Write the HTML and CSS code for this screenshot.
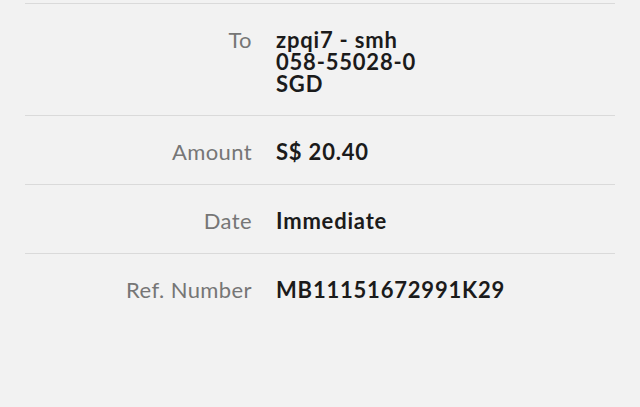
FILE: index.html
```html
<!DOCTYPE html>
<html>
    <head>
        <meta charset="UTF-8">
        <title>Transfer details</title>
        <link rel="stylesheet" href="styles.css">
    </head>
    <body>
        <div id="details">
            <div class="row row_first">
                <div class="label">To</div>
                <div class="value">zpqi7 - smh<br>058-55028-0<br>SGD</div>
            </div>
            <div class="row">
                <div class="label">Amount</div>
                <div class="value">S$ 20.40</div>
            </div>
            <div class="row">
                <div class="label">Date</div>
                <div class="value">Immediate</div>
            </div>
            <div class="row row_last">
                <div class="label">Ref. Number</div>
                <div class="value">MB11151672991K29</div>
            </div>
        </div>
    </body>
</html>
```

FILE: styles.css
```css
html, body {
    background: #f2f2f2;
}
body {
    margin: 0;
    font-family: "Lato", "Open Sans", sans-serif;
}
#details {
    margin: 3px 25px 0;
    border-top: 1px solid #dadada;
}
.row {
    display: grid;
    grid-template-columns: 227px 1fr;
    column-gap: 24px;
    padding: 25px 0 21px;
    border-bottom: 1px solid #dadada;
    line-height: 22px;
}
.row_first {
    padding-bottom: 20px;
}
.row_last {
    border-bottom: none;
}
.label {
    text-align: right;
    color: #767676;
    font-size: 22px;
    letter-spacing: 0.4px;
}
.value {
    color: #1b1b1b;
    font-size: 22px;
    font-weight: bold;
    letter-spacing: 0.8px;
}
```
